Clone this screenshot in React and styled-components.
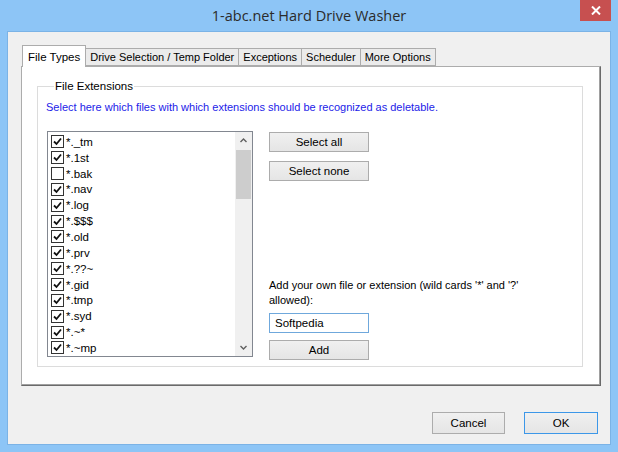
import React, { useState } from "react";
import styled, { createGlobalStyle } from "styled-components";

const GlobalStyle = createGlobalStyle`
  body {
    margin: 0;
    font-family: "Liberation Sans", Arial, sans-serif;
    font-size: 11px;
    color: #000;
  }
`;

const Window = styled.div`
  width: 618px;
  height: 452px;
  background: #8dc5f6;
  display: flex;
  flex-direction: column;
  box-sizing: border-box;
`;

const TitleBar = styled.div`
  height: 31px;
  display: grid;
  grid-template-columns: 1fr auto 1fr;
  align-items: start;
`;

const Title = styled.div`
  grid-column: 2;
  font-family: "Open Sans", "Noto Sans", sans-serif;
  font-size: 14.5px;
  color: #2b2b2b;
  line-height: 31px;
`;

const CloseButton = styled.div`
  grid-column: 3;
  justify-self: end;
  width: 31px;
  height: 21px;
  margin-right: 7px;
  background: #c75050;
  display: flex;
  align-items: center;
  justify-content: center;
`;

const Client = styled.div`
  flex: 1;
  margin: 0 7px 7px 7px;
  background: #f0f0f0;
  border: 1px solid #7bb3e6;
  padding: 13px 9px 0 13px;
  display: flex;
  flex-direction: column;
`;

const TabStrip = styled.div`
  display: flex;
  align-items: flex-end;
  height: 21px;
  padding-left: 1px;
  position: relative;
  z-index: 1;
`;

const Tab = styled.div`
  box-sizing: border-box;
  height: ${(p) => (p.$active ? "22px" : "18px")};
  margin-bottom: ${(p) => (p.$active ? "-1px" : "0")};
  margin-left: ${(p) => (p.$active ? "0" : "-1px")};
  padding: ${(p) => (p.$active ? "5px 5px 0" : "2px 4px 0")};
  background: ${(p) => (p.$active ? "#fff" : "#ebebeb")};
  border: 1px solid #acacac;
  border-bottom: ${(p) => (p.$active ? "none" : "1px solid #acacac")};
  font-size: ${(p) => (p.$active ? "11.5px" : "11px")};
  line-height: 13px;
  white-space: nowrap;
  color: #000;
  &:first-child {
    margin-left: 0;
  }
`;

const Panel = styled.div`
  height: 320px;
  box-sizing: border-box;
  background: #fff;
  border: 1px solid;
  border-color: #acacac #6a6a6a #6a6a6a #acacac;
  box-shadow: inset -1px -1px 0 #a0a0a0;
  padding: 13px 17px 0 15px;
`;

const GroupBox = styled.fieldset`
  margin: 0;
  height: 287px;
  box-sizing: border-box;
  border: 1px solid #dcdcdc;
  padding: 0 0 0 9px;
`;

const Legend = styled.legend`
  padding: 0 1px;
  margin-left: 7px;
  font-size: 11.5px;
  color: #000;
`;

const Hint = styled.div`
  color: #2222e8;
  font-size: 11px;
  margin: 9px 0 0 -1px;
`;

const Body = styled.div`
  display: flex;
  gap: 16px;
  margin-top: 18px;
`;

const ListBox = styled.div`
  width: 206px;
  height: 226px;
  box-sizing: border-box;
  border: 1px solid #828790;
  display: flex;
  background: #fff;
`;

const Items = styled.div`
  flex: 1;
  padding: 2px 0 0 3px;
  overflow: hidden;
`;

const Item = styled.div`
  height: 15.85px;
  display: flex;
  align-items: center;
  gap: 2px;
  font-size: 11.5px;
  white-space: nowrap;
`;

const CheckBox = styled.div`
  width: 13px;
  height: 13px;
  box-sizing: border-box;
  border: 1px solid #333;
  background: #fff;
  display: flex;
  align-items: center;
  justify-content: center;
  flex-shrink: 0;
`;

const ScrollBar = styled.div`
  width: 17px;
  background: #f0f0f0;
  display: flex;
  flex-direction: column;
`;

const Arrow = styled.div`
  height: 17px;
  display: flex;
  align-items: center;
  justify-content: center;
`;

const Thumb = styled.div`
  height: 49px;
  margin: 1px 1px 0;
  background: #cdcdcd;
`;

const Track = styled.div`
  flex: 1;
`;

const Side = styled.div`
  display: flex;
  flex-direction: column;
  align-items: flex-start;
  gap: 9px;
  width: 270px;
  height: 229px;
  padding-top: 1px;
  box-sizing: border-box;
`;

const Button = styled.button`
  box-sizing: border-box;
  width: ${(p) => p.$width || 100}px;
  height: ${(p) => p.$height || 20}px;
  margin: 0;
  padding: 0;
  border: 1px solid ${(p) => (p.$default ? "#3c97e8" : "#acacac")};
  background: linear-gradient(#f0f0f0, #e5e5e5);
  font-family: "Liberation Sans", Arial, sans-serif;
  font-size: 11.5px;
  color: #000;
`;

const AddGroup = styled.div`
  margin-top: auto;
  display: flex;
  flex-direction: column;
`;

const AddLabel = styled.div`
  font-size: 11px;
  line-height: 15px;
  width: 265px;
`;

const TextInput = styled.input`
  box-sizing: border-box;
  width: 100px;
  height: 20px;
  margin: 5px 0 7px;
  border: 1px solid #6fa8dc;
  padding: 0 5px;
  font-family: "Liberation Sans", Arial, sans-serif;
  font-size: 11.5px;
  outline: none;
`;

const Footer = styled.div`
  display: flex;
  justify-content: flex-end;
  gap: 19px;
  margin-top: 26px;
  padding-right: 3px;
`;

const extensions = [
  ["*._tm", true],
  ["*.1st", true],
  ["*.bak", false],
  ["*.nav", true],
  ["*.log", true],
  ["*.$$$", true],
  ["*.old", true],
  ["*.prv", true],
  ["*.??~", true],
  ["*.gid", true],
  ["*.tmp", true],
  ["*.syd", true],
  ["*.~*", true],
  ["*.~mp", true],
];

const tabs = [
  "File Types",
  "Drive Selection / Temp Folder",
  "Exceptions",
  "Scheduler",
  "More Options",
];

function Check() {
  return (
    <svg width="9" height="9" viewBox="0 0 9 9">
      <path d="M1 4.5 L3.5 7 L8 1.5" fill="none" stroke="#111" strokeWidth="1.8" />
    </svg>
  );
}

function Chevron({ down }) {
  return (
    <svg width="7" height="5" viewBox="0 0 7 5">
      <path
        d={down ? "M0.5 1 L3.5 4 L6.5 1" : "M0.5 4 L3.5 1 L6.5 4"}
        fill="none"
        stroke="#606060"
        strokeWidth="1.4"
      />
    </svg>
  );
}

export default function App() {
  const [ext, setExt] = useState("Softpedia");
  const [items, setItems] = useState(extensions);

  return (
    <Window>
      <GlobalStyle />
      <TitleBar>
        <Title>1-abc.net Hard Drive Washer</Title>
        <CloseButton>
          <svg width="10" height="9" viewBox="0 0 10 9">
            <path d="M1 0.5 L9 8.5 M9 0.5 L1 8.5" stroke="#fff" strokeWidth="2" />
          </svg>
        </CloseButton>
      </TitleBar>
      <Client>
        <TabStrip>
          {tabs.map((t, i) => (
            <Tab key={t} $active={i === 0}>
              {t}
            </Tab>
          ))}
        </TabStrip>
        <Panel>
          <GroupBox>
            <Legend>File Extensions</Legend>
            <Hint>Select here which files with which extensions should be recognized as deletable.</Hint>
            <Body>
              <ListBox>
                <Items>
                  {items.map(([name, checked], i) => (
                    <Item
                      key={name}
                      onClick={() =>
                        setItems(items.map((it, j) => (j === i ? [it[0], !it[1]] : it)))
                      }
                    >
                      <CheckBox>{checked && <Check />}</CheckBox>
                      {name}
                    </Item>
                  ))}
                </Items>
                <ScrollBar>
                  <Arrow>
                    <Chevron />
                  </Arrow>
                  <Thumb />
                  <Track />
                  <Arrow>
                    <Chevron down />
                  </Arrow>
                </ScrollBar>
              </ListBox>
              <Side>
                <Button onClick={() => setItems(items.map((it) => [it[0], true]))}>Select all</Button>
                <Button onClick={() => setItems(items.map((it) => [it[0], false]))}>Select none</Button>
                <AddGroup>
                  <AddLabel>Add your own file or extension (wild cards '*' and '?' allowed):</AddLabel>
                  <TextInput value={ext} onChange={(e) => setExt(e.target.value)} />
                  <Button>Add</Button>
                </AddGroup>
              </Side>
            </Body>
          </GroupBox>
        </Panel>
        <Footer>
          <Button $width={73} $height={22}>Cancel</Button>
          <Button $width={74} $height={22} $default>OK</Button>
        </Footer>
      </Client>
    </Window>
  );
}
